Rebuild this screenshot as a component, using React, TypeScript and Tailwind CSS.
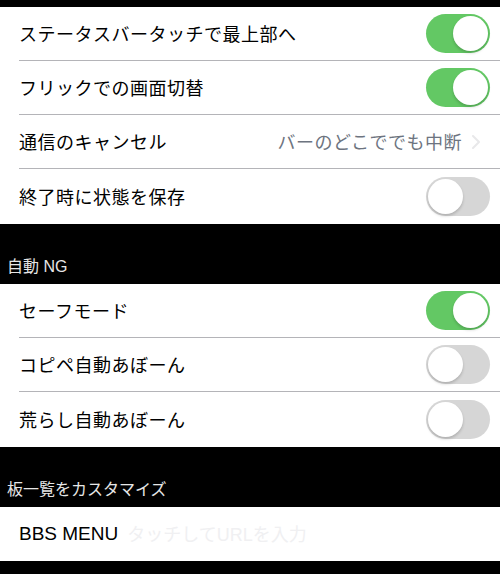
import { useState } from 'react';

type ToggleProps = { on: boolean; onChange: () => void };

function Toggle({ on, onChange }: ToggleProps) {
  return (
    <button
      onClick={onChange}
      className={
        'relative w-[64px] h-[39px] rounded-full shrink-0 transition-colors ' +
        (on ? 'bg-[#63c864]' : 'bg-[#d6d6d6]')
      }
    >
      <span
        className={
          'absolute top-[2px] w-[35px] h-[35px] rounded-full bg-white shadow-[0_2px_3px_rgba(0,0,0,0.18)] ' +
          (on ? 'left-[27px]' : 'left-[2px]')
        }
      />
    </button>
  );
}

function Row({
  label,
  last,
  tall,
  children,
}: {
  label: string;
  last?: boolean;
  tall?: boolean;
  children?: React.ReactNode;
}) {
  return (
    <div className={'pl-[19px] bg-white ' + (tall ? 'h-[55px]' : 'h-[54px]')}>
      <div
        className={
          'h-full flex items-center justify-between pr-[10px] ' +
          (last ? '' : 'border-b border-[#b4b4b8]')
        }
      >
        <span className="mt-[3px] text-[18px] tracking-[0.5px] text-black">{label}</span>
        {children}
      </div>
    </div>
  );
}

function SectionHeader({ title }: { title: string }) {
  return (
    <div className="h-[60px] flex items-end pl-[7px] pb-[5px]">
      <span className="text-[16px] text-[#e6e6e6]">{title}</span>
    </div>
  );
}

export default function App() {
  const [toggles, setToggles] = useState({
    statusBar: true,
    flick: true,
    saveState: false,
    safeMode: true,
    copipe: false,
    arashi: false,
  });

  const flip = (key: keyof typeof toggles) =>
    setToggles((t) => ({ ...t, [key]: !t[key] }));

  return (
    <div
      className="w-[500px] h-[574px] bg-black overflow-hidden pt-[7px]"
      style={{ fontFamily: '"Liberation Sans", "Noto Sans CJK JP", sans-serif' }}
    >
      {/* 一般 */}
      <div>
        <Row label="ステータスバータッチで最上部へ">
          <Toggle on={toggles.statusBar} onChange={() => flip('statusBar')} />
        </Row>
        <Row label="フリックでの画面切替">
          <Toggle on={toggles.flick} onChange={() => flip('flick')} />
        </Row>
        <Row label="通信のキャンセル">
          <div className="flex items-center gap-[10px] pr-[10px]">
            <span className="mt-[3px] text-[18px] tracking-[0.5px] text-[#6d7480]">バーのどこででも中断</span>
            <svg width="8" height="14" viewBox="0 0 8 14" fill="none" stroke="#e8e8ea" strokeWidth="2" strokeLinecap="round" strokeLinejoin="round">
              <polyline points="1 1 7 7 1 13" />
            </svg>
          </div>
        </Row>
        <Row label="終了時に状態を保存" last tall>
          <Toggle on={toggles.saveState} onChange={() => flip('saveState')} />
        </Row>
      </div>

      <SectionHeader title="自動 NG" />
      <div>
        <Row label="セーフモード">
          <Toggle on={toggles.safeMode} onChange={() => flip('safeMode')} />
        </Row>
        <Row label="コピペ自動あぼーん">
          <Toggle on={toggles.copipe} onChange={() => flip('copipe')} />
        </Row>
        <Row label="荒らし自動あぼーん" last tall>
          <Toggle on={toggles.arashi} onChange={() => flip('arashi')} />
        </Row>
      </div>

      <SectionHeader title="板一覧をカスタマイズ" />
      <div className="h-[54px] bg-white flex items-center pl-[19px] gap-[9px]">
        <span className="text-[19px] text-black">BBS MENU</span>
        <input
          className="flex-1 min-w-0 mt-[2px] text-[18px] outline-none bg-transparent placeholder:text-[#f0f0f2]"
          placeholder="タッチしてURLを入力"
        />
      </div>
    </div>
  );
}
